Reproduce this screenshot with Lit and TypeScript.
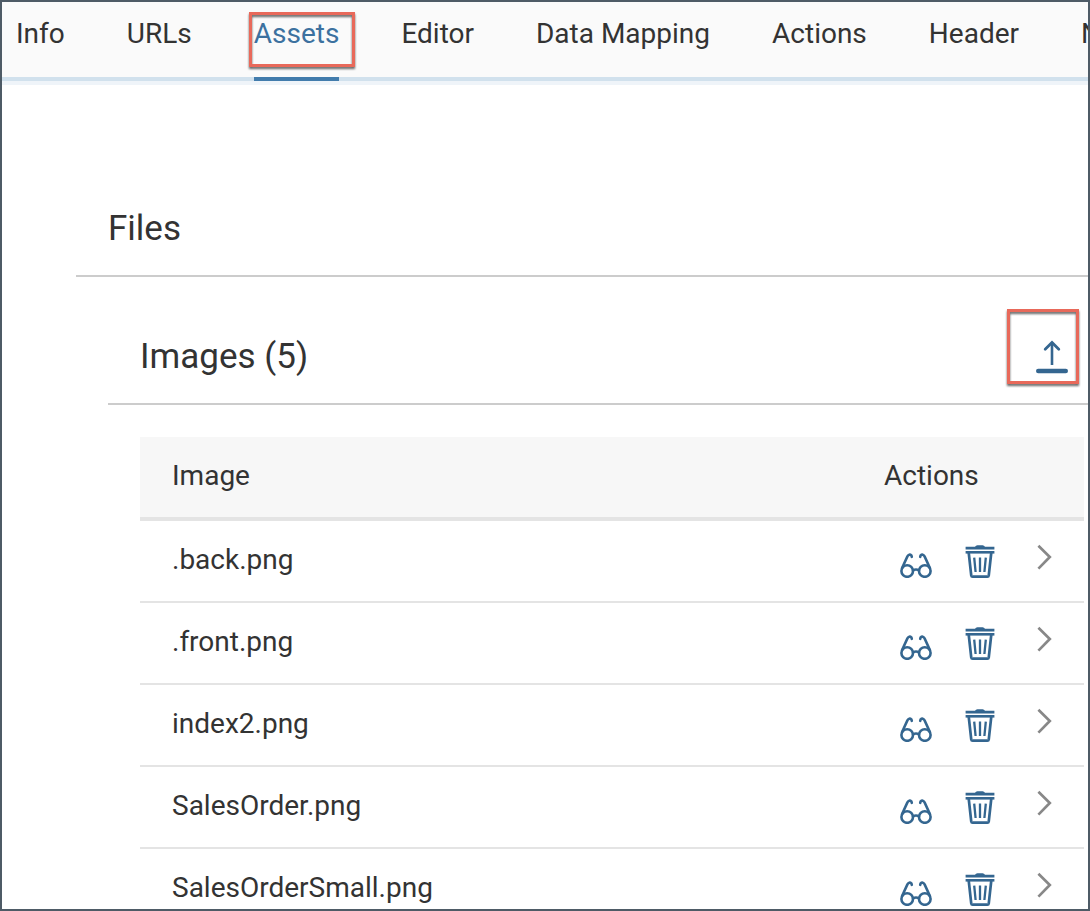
import { LitElement, html, css, svg } from "lit";
import { customElement, property, state } from "lit/decorators.js";
import { classMap } from "lit/directives/class-map.js";

const TABS = ["Info", "URLs", "Assets", "Editor", "Data Mapping", "Actions", "Header", "Notifications"];
const IMAGES = [".back.png", ".front.png", "index2.png", "SalesOrder.png", "SalesOrderSmall.png"];

const glasses = svg`
  <g fill="none" stroke="currentColor" stroke-width="2.6" stroke-linecap="round">
    <circle cx="7.2" cy="27" r="5.8" />
    <circle cx="24.8" cy="27" r="5.8" />
    <path d="M13 26.2 Q16 24.8 19 26.2" />
    <path d="M2.1 24 L7.4 12.4 Q9.2 9.4 11.4 11.4 L11.8 12.8" />
    <path d="M29.9 24 L24.6 12.4 Q22.8 9.4 20.6 11.4 L20.2 12.8" />
  </g>`;

const trash = svg`
  <path fill="currentColor" d="M11 2.8 Q11.8 1.2 13.4 1.2 H18.6 Q20.2 1.2 21 2.8 H30.4 V5.6 H1.6 V2.8 Z" />
  <path fill="currentColor" d="M1.6 7 H30.4 V9.6 H1.6 Z" />
  <g fill="none" stroke="currentColor" stroke-width="2.7">
    <path d="M4.7 8.5 L7.2 31.2 Q7.4 32.6 8.6 32.6 H23.4 Q24.6 32.6 24.8 31.2 L27.3 8.5" />
    <path stroke-width="2.3" d="M10.2 13.6 L11.6 28 M16 13.6 V28 M21.8 13.6 L20.4 28" />
  </g>`;

@customElement("tab-bar")
class TabBar extends LitElement {
  @property({ attribute: false }) tabs: string[] = [];
  @state() private current = "Assets";

  static styles = css`
    :host { display: block; }
    .bar {
      display: flex;
      gap: 62px;
      padding-left: 14px;
      background: #fafafa;
      border-bottom: 4px solid #d1e1ed;
      box-shadow: 0 4px #eff4f9;
    }
    .tab {
      position: relative;
      flex: none;
      margin-bottom: -4px;
      padding-bottom: 11px;
      border-bottom: 4px solid transparent;
      font-size: 28px;
      line-height: 64px;
      color: #333;
      text-decoration: none;
    }
    .current { color: #3c719f; border-bottom-color: #427cac; }
    .mark {
      position: absolute;
      inset: 10px -16px 10px -5px;
      border: 3px solid #e8695a;
      filter: drop-shadow(0 2px 1px rgba(0, 0, 0, 0.6));
      pointer-events: none;
    }
  `;

  render() {
    return html`<nav class="bar">
      ${this.tabs.map((t) => {
        const on = t === this.current;
        return html`<a
          class=${classMap({ tab: true, current: on })}
          href="#"
          aria-current=${on ? "page" : "false"}
          @click=${(e: Event) => { e.preventDefault(); this.current = t; }}
          >${t}${on ? html`<span class="mark"></span>` : ""}</a>`;
      })}
    </nav>`;
  }
}

@customElement("image-table")
class ImageTable extends LitElement {
  @property({ attribute: false }) images: string[] = [];

  static styles = css`
    :host { display: block; }
    .table {
      width: 100%;
      border-collapse: separate;
      border-spacing: 0;
      table-layout: fixed;
      font-size: 28px;
      line-height: 36px;
    }
    .head, .cell {
      box-sizing: border-box;
      padding: 0;
      text-align: left;
      vertical-align: middle;
      font-weight: 400;
    }
    .head { height: 84px; background: #f7f7f7; border-bottom: 4px solid #e4e4e4; padding-bottom: 2px; }
    .cell { height: 82px; border-bottom: 2px solid #e4e4e4; }
    .name { padding-left: 32px; padding-bottom: 2px; }
    .actions { width: 128px; }
    .nav { width: 72px; }
    .group { display: flex; }
    .icon {
      display: flex;
      justify-content: center;
      width: 64px;
      padding: 0;
      border: 0;
      background: none;
      color: #346690;
      cursor: pointer;
    }
    .arrow { color: #888; }
    .glyph { display: block; width: 32px; height: 34px; }
  `;

  render() {
    return html`<table class="table">
      <thead>
        <tr>
          <th class="head name" scope="col">Image</th>
          <th class="head actions" scope="col">Actions</th>
          <td class="head nav"></td>
        </tr>
      </thead>
      <tbody>
        ${this.images.map((name) => html`<tr>
          <td class="cell name">${name}</td>
          <td class="cell">
            <div class="group">
              <button class="icon" aria-label="Preview ${name}">
                <svg class="glyph" viewBox="0 0 32 34">${glasses}</svg>
              </button>
              <button class="icon" aria-label="Delete ${name}">
                <svg class="glyph" viewBox="0 0 32 34">${trash}</svg>
              </button>
            </div>
          </td>
          <td class="cell">
            <button class="icon arrow" aria-label="Open ${name}">
              <svg class="glyph" viewBox="0 0 32 34">
                <path d="M10.4 1.8 L21.8 13 L10.4 24.6" fill="none" stroke="currentColor" stroke-width="2.7" />
              </svg>
            </button>
          </td>
        </tr>`)}
      </tbody>
    </table>`;
  }
}

@customElement("app-root")
class AppRoot extends LitElement {
  static styles = css`
    :host {
      display: block;
      box-sizing: border-box;
      height: 100vh;
      overflow: hidden;
      border: 2px solid #4e5b66;
      background: #fff;
      color: #333;
      font-family: Roboto, "Liberation Sans", sans-serif;
    }
    .files { padding: 4px 0 0 74px; }
    .title {
      margin: 0;
      font-size: 35px;
      line-height: 48px;
      font-weight: 400;
    }
    .top { padding: 120px 32px 22px; border-bottom: 2px solid #ccc; }
    .images { padding-left: 32px; }
    .toolbar {
      display: flex;
      justify-content: space-between;
      padding: 56px 20px 22px 32px;
      border-bottom: 2px solid #ccc;
    }
    .upload {
      position: relative;
      display: flex;
      align-items: center;
      padding: 0;
      border: 0;
      background: none;
      color: #346690;
      cursor: pointer;
    }
    .glyph { display: block; width: 32px; height: 34px; }
    .mark {
      position: absolute;
      inset: -24px -11px -3px -29px;
      border: 3px solid #e8695a;
      filter: drop-shadow(0 2px 1px rgba(0, 0, 0, 0.6));
      pointer-events: none;
    }
    .list { padding: 32px 4px 0 32px; }
  `;

  render() {
    return html`
      <tab-bar .tabs=${TABS}></tab-bar>
      <main class="files">
        <header class="top"><h1 class="title">Files</h1></header>
        <section class="images">
          <header class="toolbar">
            <h2 class="title">Images (${IMAGES.length})</h2>
            <button class="upload" aria-label="Upload image">
              <svg class="glyph" viewBox="0 0 32 34">
                <g fill="none" stroke="currentColor" stroke-linecap="round">
                  <path stroke-width="2.6" stroke-linecap="butt" d="M16 2.5 V25" />
                  <path stroke-width="2.8" d="M9.2 9.3 L16 2.5 L22.8 9.3" />
                  <path stroke-width="4.4" d="M2.2 31 H29.8" />
                </g>
              </svg>
              <span class="mark"></span>
            </button>
          </header>
          <div class="list"><image-table .images=${IMAGES}></image-table></div>
        </section>
      </main>
    `;
  }
}
